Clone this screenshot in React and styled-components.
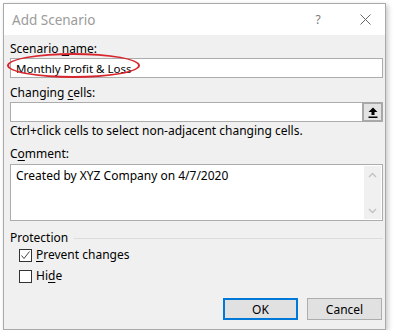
import React from 'react';
import styled, { createGlobalStyle } from 'styled-components';

const GlobalStyle = createGlobalStyle`
    body {
        margin: 0;
        background: #fff;
        font-family: "Noto Sans", "Open Sans", sans-serif;
        font-size: 12px;
        color: #000;
    }
`;

const Dialog = styled.div`
    box-sizing: border-box;
    width: 383px;
    height: 327px;
    margin: 3px 0 0 3px;
    border: 1px solid #a9a9a9;
    background: #f0f0f0;
    box-shadow: 2px 2px 5px rgba(0, 0, 0, 0.22);
    display: flex;
    flex-direction: column;
`;

const TitleBar = styled.div`
    height: 31px;
    background: #fff;
    display: flex;
    align-items: center;
    padding-left: 8px;
    > span {
        flex-grow: 1;
        font-size: 13.5px;
        color: #9b9b9b;
    }
`;

const TitleButton = styled.div`
    width: 40px;
    height: 31px;
    display: flex;
    align-items: center;
    justify-content: center;
    color: #777;
    font-size: 12px;
    & + & {
        margin-left: 7px;
    }
`;

const Body = styled.div`
    flex-grow: 1;
    display: flex;
    flex-direction: column;
    padding: 6px 2px 9px 6px;
`;

const Label = styled.div`
    line-height: 16px;
    margin-top: ${(p) => p.$top || 0}px;
    margin-bottom: ${(p) => p.$bottom || 0}px;
    white-space: nowrap;
    u {
        text-decoration: underline;
        text-underline-offset: 2px;
    }
`;

const InputWrap = styled.div`
    position: relative;
`;

const TextBox = styled.div`
    box-sizing: border-box;
    height: 20px;
    border: 1px solid #acacac;
    background: #fff;
    display: flex;
    align-items: center;
    padding-left: 5px;
    > span {
        flex-grow: 1;
        font-size: 11.5px;
    }
`;

const Ellipse = styled.div`
    position: absolute;
    left: -3px;
    top: -5px;
    width: 133px;
    height: 25px;
    box-sizing: border-box;
    border: 2px solid #d8262e;
    border-radius: 50%;
    pointer-events: none;
`;

const RefButton = styled.div`
    box-sizing: border-box;
    width: 21px;
    height: 20px;
    margin-right: -1px;
    border: 2px solid #a8a8a8;
    background: #e3e3e3;
    display: flex;
    align-items: center;
    justify-content: center;
`;

const CommentBox = styled.div`
    box-sizing: border-box;
    height: 57px;
    border: 1px solid #acacac;
    background: #fff;
    display: flex;
    padding: 1px;
    > div.text {
        flex-grow: 1;
        padding: 2px 0 0 4px;
        line-height: 16px;
    }
`;

const ScrollBar = styled.div`
    width: 17px;
    background: #f0f0f0;
    display: flex;
    flex-direction: column;
    justify-content: space-between;
    > div {
        height: 17px;
        display: flex;
        align-items: center;
        justify-content: center;
    }
`;

const Group = styled.div`
    display: flex;
    align-items: center;
    margin-top: 9px;
    line-height: 16px;
    &::after {
        content: '';
        flex-grow: 1;
        height: 1px;
        background: #dcdcdc;
        margin-left: 6px;
    }
`;

const CheckRow = styled.label`
    display: flex;
    align-items: center;
    gap: 4px;
    padding-left: 9px;
    line-height: 16px;
    margin-top: ${(p) => p.$top}px;
    u {
        text-decoration: underline;
        text-underline-offset: 2px;
    }
`;

const Box = styled.span`
    box-sizing: border-box;
    width: 13px;
    height: 13px;
    border: 1px solid #333;
    background: #fff;
    display: flex;
    align-items: center;
    justify-content: center;
`;

const Buttons = styled.div`
    margin-top: auto;
    display: flex;
    justify-content: flex-end;
    gap: 9px;
    padding-right: 1px;
`;

const Button = styled.div`
    box-sizing: border-box;
    width: 75px;
    height: 22px;
    background: #e1e1e1;
    border: ${(p) => (p.$primary ? '2px solid #0078d7' : '1px solid #adadad')};
    display: flex;
    align-items: center;
    justify-content: center;
`;

const Chevron = ({ up }) => (
    <svg width="9" height="6" viewBox="0 0 9 6">
        <path
            d={up ? 'M1 5 L4.5 1.5 L8 5' : 'M1 1 L4.5 4.5 L8 1'}
            fill="none"
            stroke="#c2c2c2"
            strokeWidth="1.4"
        />
    </svg>
);

const App = () => {
    return (
        <>
            <GlobalStyle />
            <Dialog>
                <TitleBar>
                    <span>Add Scenario</span>
                    <TitleButton>?</TitleButton>
                    <TitleButton>
                        <svg width="11" height="11" viewBox="0 0 11 11">
                            <path d="M0.5 0.5 L10.5 10.5 M10.5 0.5 L0.5 10.5" stroke="#666" strokeWidth="1" />
                        </svg>
                    </TitleButton>
                </TitleBar>
                <Body>
                    <Label $bottom={1}>
                        Scenario <u>n</u>ame:
                    </Label>
                    <InputWrap>
                        <TextBox>
                            <span>Monthly Profit &amp; Loss</span>
                        </TextBox>
                        <Ellipse />
                    </InputWrap>

                    <Label $top={7} $bottom={1}>
                        Changing <u>c</u>ells:
                    </Label>
                    <TextBox>
                        <span />
                        <RefButton>
                            <svg width="10" height="11" viewBox="0 0 10 11">
                                <path d="M5 0.5 L9.5 5 L6.5 5 L6.5 8 L3.5 8 L3.5 5 L0.5 5 Z" fill="#000" />
                                <rect x="0.5" y="9.5" width="9" height="1.5" fill="#000" />
                            </svg>
                        </RefButton>
                    </TextBox>
                    <Label $top={1}>Ctrl+click cells to select non-adjacent changing cells.</Label>

                    <Label $top={7} $bottom={2}>
                        C<u>o</u>mment:
                    </Label>
                    <CommentBox>
                        <div className="text">Created by XYZ Company on 4/7/2020</div>
                        <ScrollBar>
                            <div>
                                <Chevron up />
                            </div>
                            <div>
                                <Chevron />
                            </div>
                        </ScrollBar>
                    </CommentBox>

                    <Group>Protection</Group>
                    <CheckRow $top={1}>
                        <Box>
                            <svg width="11" height="11" viewBox="0 0 11 11">
                                <path d="M1.5 5.5 L4 8.5 L9.5 1.5" fill="none" stroke="#444" strokeWidth="1" />
                            </svg>
                        </Box>
                        <span>
                            <u>P</u>revent changes
                        </span>
                    </CheckRow>
                    <CheckRow $top={5}>
                        <Box />
                        <span>
                            Hi<u>d</u>e
                        </span>
                    </CheckRow>

                    <Buttons>
                        <Button $primary>OK</Button>
                        <Button>Cancel</Button>
                    </Buttons>
                </Body>
            </Dialog>
        </>
    );
};

export default App;
